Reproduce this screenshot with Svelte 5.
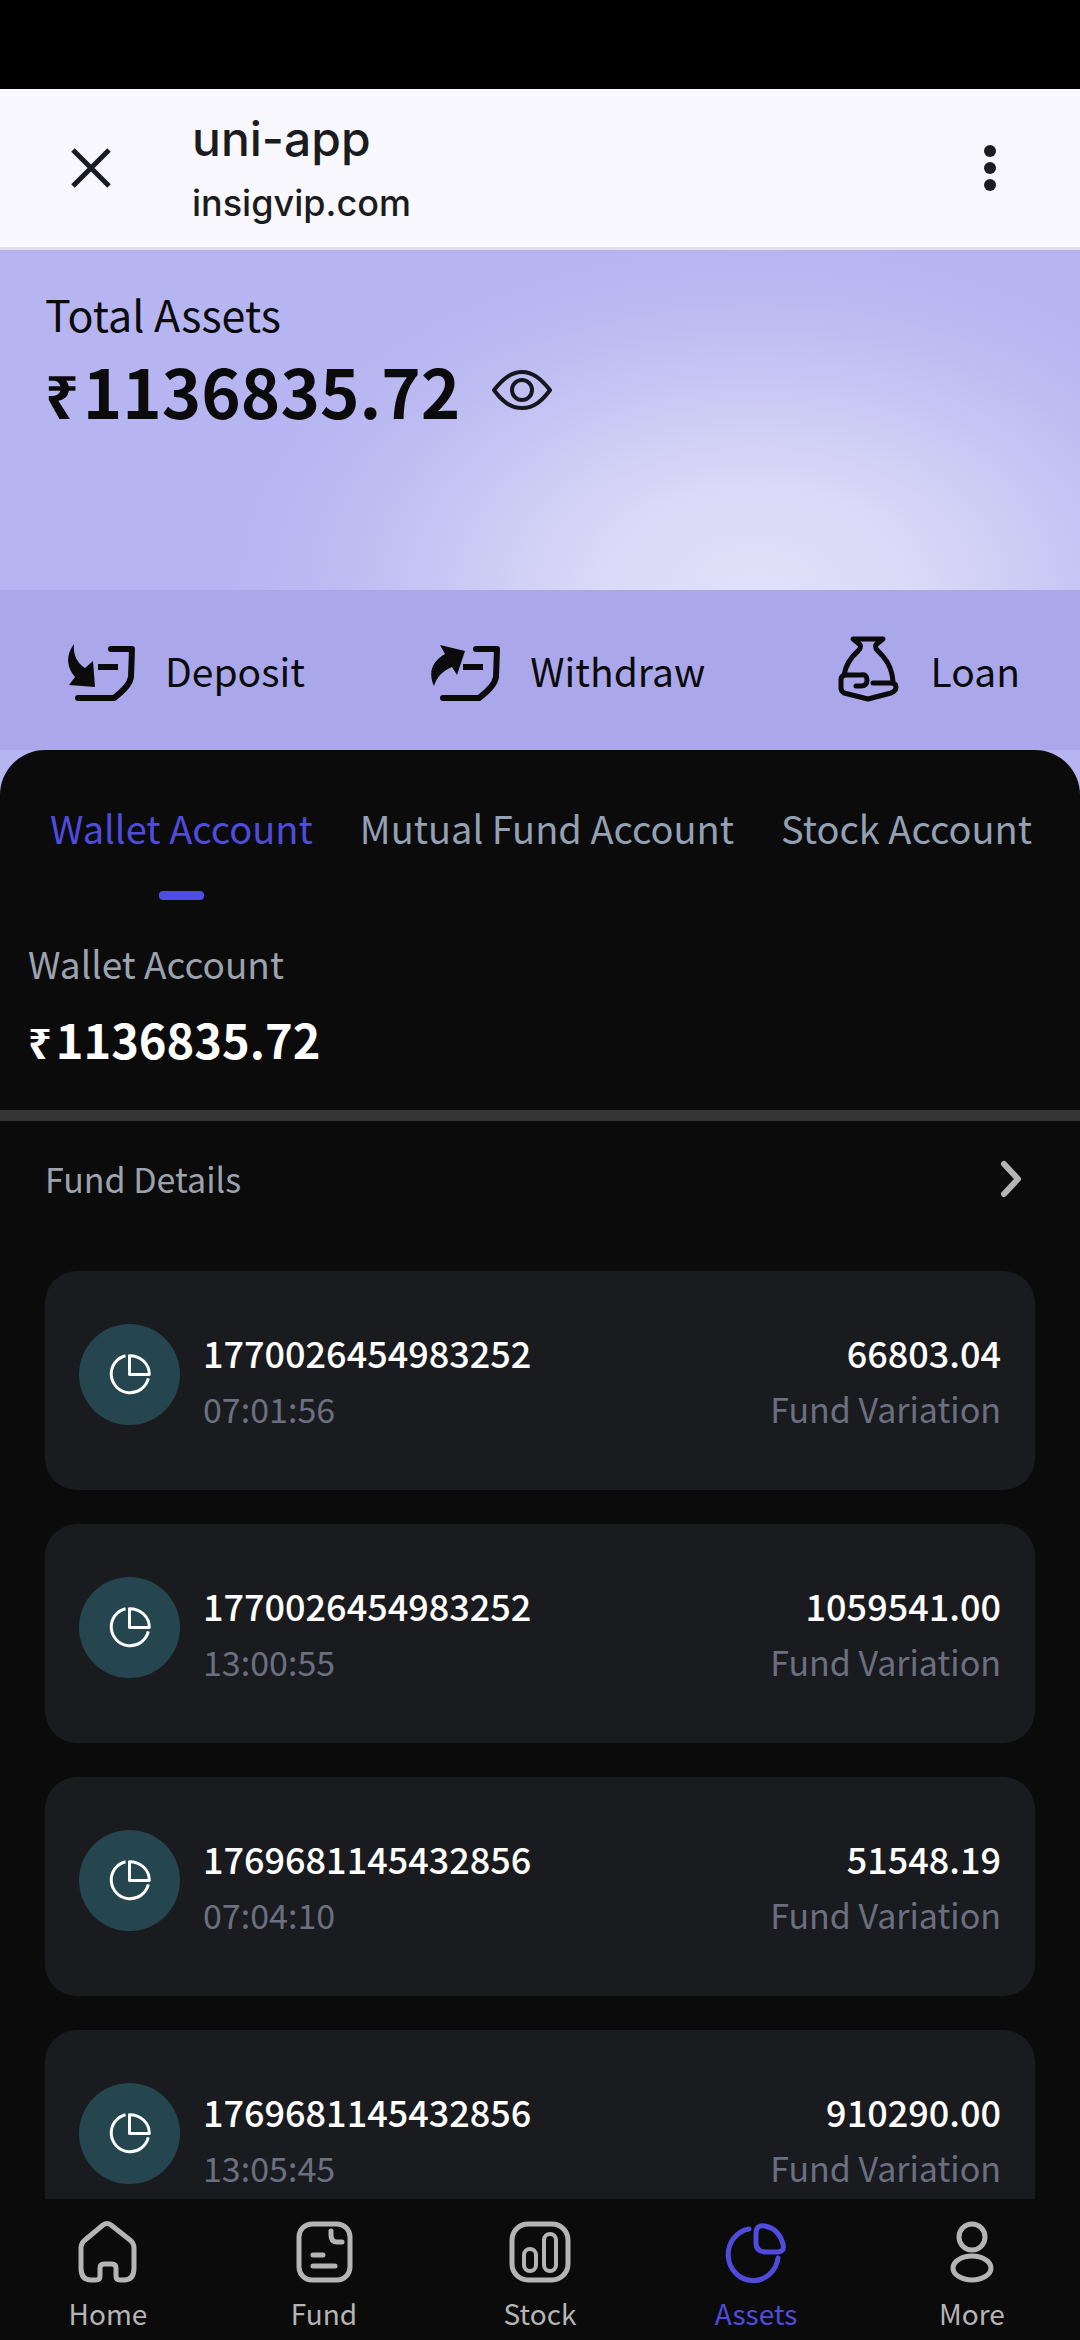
<script lang="ts">
  interface FundRecord {
    id: string
    time: string
    amount: string
  }

  const actions = ['Deposit', 'Withdraw', 'Loan']
  const tabs = ['Wallet Account', 'Mutual Fund Account', 'Stock Account']
  const navItems = ['Home', 'Fund', 'Stock', 'Assets', 'More']

  const records: FundRecord[] = [
    { id: '1770026454983252', time: '07:01:56', amount: '66803.04' },
    { id: '1770026454983252', time: '13:00:55', amount: '1059541.00' },
    { id: '1769681145432856', time: '07:04:10', amount: '51548.19' },
    { id: '1769681145432856', time: '13:05:45', amount: '910290.00' },
  ]

  let activeTab = $state('Wallet Account')
  let activeNav = $state('Assets')
  let showBalance = $state(true)

  const total = '1136835.72'
</script>

<div class="screen">
  <div class="status-bar"></div>

  <header class="browser-bar">
    <button class="icon-button" aria-label="Close">
      <svg width="42" height="42" viewBox="0 0 42 42" fill="none" stroke="#1b1c20" stroke-width="5">
        <path d="M3 3 39 39M39 3 3 39" />
      </svg>
    </button>
    <div class="browser-bar__text">
      <div class="browser-bar__title">uni-app</div>
      <div class="browser-bar__url">insigvip.com</div>
    </div>
    <button class="icon-button" aria-label="Menu">
      <svg width="12" height="48" viewBox="0 0 12 48" fill="#1b1c20">
        <circle cx="6" cy="7" r="6" />
        <circle cx="6" cy="24" r="6" />
        <circle cx="6" cy="41" r="6" />
      </svg>
    </button>
  </header>

  <main class="page">
    <section class="hero">
      <div class="hero__label">Total Assets</div>
      <div class="hero__row">
        <span class="hero__amount"><span class="rupee">₹</span>{showBalance ? total : '******'}</span>
        <button class="icon-button" aria-label="Toggle balance" onclick={() => (showBalance = !showBalance)}>
          <svg width="60" height="42" viewBox="0 0 60 42" fill="none" stroke="#16161f" stroke-width="4">
            <path d="M2 21C11 10 19 3 30 3s19 7 28 18C50 32 42 39 30 39S10 32 2 21Z" stroke-linejoin="round" />
            <circle cx="30" cy="21" r="10" />
          </svg>
        </button>
      </div>
    </section>

    <section class="actions">
      {#each actions as action}
        <button class="action">
          <svg width="72" height="72" viewBox="0 0 72 72" fill="none" stroke="#0b0b0c" stroke-width="6" stroke-linecap="round" stroke-linejoin="round">
            {#if action === 'Loan'}
              <g stroke-width="5">
                <path d="M13 41C15 30 20 23 27 17Q32 12 27 9L22 5H52L47 9Q42 12 47 17C55 25 61 33 62 48" />
                <path d="M25 52H30Q36 52 36 46T30 41H15Q10 41 10 46V54Q10 57 13 59L37 65L60 59Q65 57 65 53Q65 49 60 49H42" />
              </g>
            {:else}
              <path d="M46 15H67L66 43C65 50 57 58 49 64H13" />
              <path d="M33 33H53" stroke-linecap="butt" />
              {#if action === 'Deposit'}
                <path d="M9 10C1 20 1 33 10 43L4 51L30 53L28 27L20 34C12 29 8 21 9 10Z" fill="#0b0b0c" stroke="none" />
              {:else}
                <path d="M4 52C-3 37 4 26 15 20L10 11L35 17L27 41L22 33C13 37 7 42 4 52Z" fill="#0b0b0c" stroke="none" />
              {/if}
            {/if}
          </svg>
          <span>{action}</span>
        </button>
      {/each}
    </section>

    <div class="panel">
      <div class="tabs" role="tablist">
        {#each tabs as tab}
          <button
            class="tab"
            class:tab--active={activeTab === tab}
            role="tab"
            aria-selected={activeTab === tab}
            onclick={() => (activeTab = tab)}
          >
            {tab}
          </button>
        {/each}
      </div>

      <section class="wallet">
        <div class="wallet__label">{activeTab}</div>
        <div class="wallet__amount"><span class="rupee">₹</span>{total}</div>
      </section>

      <button class="details">
        <span>Fund Details</span>
        <svg width="22" height="40" viewBox="0 0 22 40" fill="none" stroke="#b5b5b5" stroke-width="6" stroke-linecap="round" stroke-linejoin="round">
          <path d="M4 5 18 20 4 35" />
        </svg>
      </button>

      <ul class="records">
        {#each records as record}
          <li class="record">
            <svg class="record__icon" width="101" height="101" viewBox="0 0 102 102" fill="none" stroke="#fff" stroke-width="3">
              <circle cx="51" cy="51" r="51" fill="#25464f" stroke="none" />
              <path d="M47 32A19 19 0 1 0 70 55" />
              <path d="M51 32V51H71C71 40 62 32 51 32Z" stroke-linejoin="round" />
            </svg>
            <div class="record__main">
              <div class="record__value">{record.id}</div>
              <div class="record__note">{record.time}</div>
            </div>
            <div class="record__side">
              <div class="record__value">{record.amount}</div>
              <div class="record__note">Fund Variation</div>
            </div>
          </li>
        {/each}
      </ul>
    </div>
  </main>

  <nav class="nav">
    {#each navItems as item}
      <button class="nav__item" class:nav__item--active={activeNav === item} onclick={() => (activeNav = item)}>
        <svg width="64" height="64" viewBox="0 0 64 64" fill="none" stroke="currentColor" stroke-width="5" stroke-linecap="round" stroke-linejoin="round">
          {#if item === 'Home'}
            <path d="M27 5Q31 2 35 5L54 20Q58 23 58 28V48Q58 60 48 60H44Q40 60 40 56V48Q40 44 36 44H28Q24 44 24 48V56Q24 60 20 60H15Q5 60 5 48V28Q5 23 9 20Z" />
          {:else if item === 'Fund'}
            <rect x="7" y="4" width="51" height="56" rx="13" />
            <path d="M39 11V15Q39 22 45 22H50M21 35H31M21 46H43" />
          {:else if item === 'Stock'}
            <rect x="4" y="4" width="56" height="56" rx="16" />
            <g stroke-width="4">
              <rect x="16" y="29" width="12" height="22" rx="6" />
              <rect x="36" y="14" width="12" height="37" rx="6" />
            </g>
          {:else if item === 'Assets'}
            <path d="M25 9A25 26 0 1 0 54 38" />
            <path d="M32 14Q32 4 41 6Q55 9 59 24Q61 32 53 32H42Q32 32 32 23Z" />
          {:else}
            <circle cx="32" cy="17" r="13" />
            <ellipse cx="32" cy="48" rx="19" ry="12" />
          {/if}
        </svg>
        <span>{item}</span>
      </button>
    {/each}
  </nav>
</div>

<style>
  :global(body) {
    margin: 0;
    background: #0b0b0b;
  }

  .screen {
    display: flex;
    flex-direction: column;
    height: 100vh;
    overflow: hidden;
    background: #0b0b0b;
    font-family: 'Noto Sans CJK SC', 'Noto Sans', sans-serif;
  }

  button {
    margin: 0;
    padding: 0;
    border: none;
    background: none;
    color: inherit;
    font: inherit;
    cursor: pointer;
  }

  svg {
    display: block;
    flex-shrink: 0;
  }

  .status-bar {
    flex: 0 0 89px;
    background: #000;
  }

  /* Browser bar */
  .browser-bar {
    display: flex;
    align-items: center;
    flex: 0 0 158px;
    padding: 0 84px 0 70px;
    border-bottom: 3px solid #e2e1ea;
    background: #faf8ff;
    color: #1b1c20;
    font-family: Inter, sans-serif;
    font-weight: 500;
  }

  .browser-bar__text {
    flex: 1;
    margin-left: 80px;
    padding-top: 6px;
  }

  .browser-bar__title {
    font-size: 48px;
    line-height: 64px;
  }

  .browser-bar__url {
    font-size: 36px;
    line-height: 64px;
  }

  .page {
    flex: 1;
    min-height: 0;
    overflow: hidden;
    background: #b7b5f1;
  }

  /* The sign is drawn lower than the digits */
  .rupee {
    margin-right: 4px;
    font-size: 88%;
    line-height: 1;
  }

  .hero {
    box-sizing: border-box;
    height: 340px;
    padding: 31px 45px;
    background: radial-gradient(ellipse 530px 350px at 70% 100%, #e1e1fb 0%, #dad9f7 30%, #c8c6f4 60%, #bbbaf2 82%, #b7b5f1 100%);
    color: #0b0b0b;
  }

  .hero__label {
    font-size: 43px;
    line-height: 64px;
  }

  .hero__row {
    display: flex;
    align-items: center;
    gap: 32px;
  }

  .hero__amount {
    font-size: 67px;
    line-height: 90px;
    font-weight: 700;
  }

  .actions {
    display: flex;
    align-items: center;
    justify-content: space-between;
    height: 160px;
    padding: 0 60px 0 65px;
    background: #aaa8ea;
    color: #0b0b0c;
  }

  .action {
    display: flex;
    align-items: center;
    gap: 28px;
    font-size: 39px;
    line-height: 60px;
  }

  .panel {
    border-radius: 45px 45px 0 0;
    background: #0b0b0b;
  }

  /* Account tabs */
  .tabs {
    display: flex;
    justify-content: space-between;
    padding: 48px 48px 0 50px;
  }

  .tab {
    display: flex;
    flex-direction: column;
    align-items: center;
    gap: 33px;
    height: 102px;
    color: #94a0b4;
    font-size: 38px;
    line-height: 60px;
  }

  .tab--active {
    color: #4f4bdc;
  }

  .tab--active::after {
    width: 45px;
    height: 9px;
    border-radius: 4px;
    background: #4f4be6;
    content: '';
  }

  .wallet {
    padding: 33px 28px 25px;
    border-bottom: 11px solid #363636;
  }

  .wallet__label {
    color: #9ca3af;
    font-size: 37px;
    line-height: 60px;
  }

  .wallet__amount {
    color: #fff;
    font-size: 47px;
    line-height: 92px;
    font-weight: 700;
  }

  .details {
    display: flex;
    align-items: center;
    justify-content: space-between;
    width: 100%;
    height: 150px;
    padding: 0 58px 34px 45px;
    color: #9ca3af;
    font-size: 34px;
    line-height: 60px;
  }

  /* Fund records */
  .records {
    display: flex;
    flex-direction: column;
    gap: 34px;
    margin: 0;
    padding: 0 45px;
    list-style: none;
  }

  .record {
    display: flex;
    align-items: flex-start;
    padding: 53px 34px;
    border-radius: 32px;
    background: #1a1b1f;
  }

  .record__main {
    flex: 1;
    margin-left: 23px;
  }

  .record__side {
    text-align: right;
  }

  .record__value {
    color: #fff;
    font-size: 36px;
    line-height: 57px;
    font-weight: 500;
  }

  .record__note {
    color: #6b7080;
    font-size: 34px;
    line-height: 56px;
  }

  /* Bottom navigation */
  .nav {
    display: flex;
    flex: 0 0 141px;
    background: #0b0b0b;
    color: #b5b5b5;
  }

  .nav__item {
    display: flex;
    flex: 1;
    flex-direction: column;
    align-items: center;
    gap: 8px;
    padding-top: 21px;
    font-size: 28px;
    line-height: 42px;
  }

  .nav__item--active {
    color: #4f4bdc;
  }
</style>
